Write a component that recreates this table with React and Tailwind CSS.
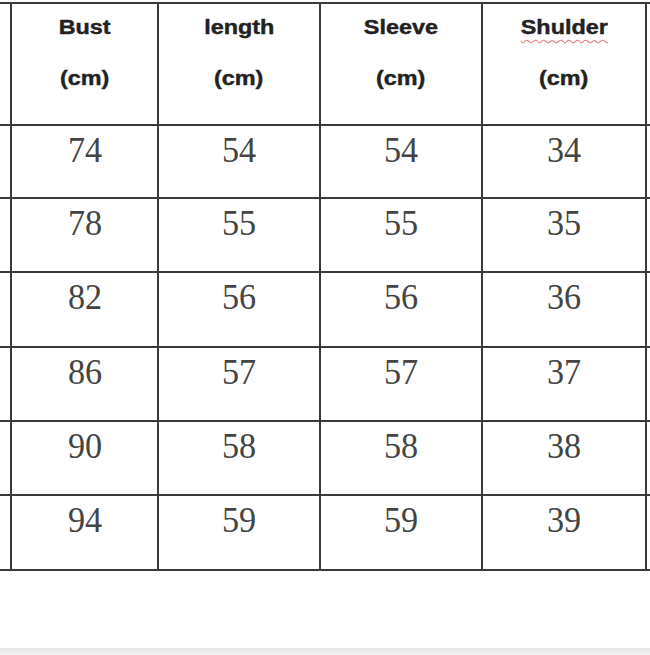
const headers = ["Bust", "length", "Sleeve", "Shulder"];

const rows = [
  { h: "h-[73px]", vals: ["74", "54", "54", "34"] },
  { h: "h-[74px]", vals: ["78", "55", "55", "35"] },
  { h: "h-[75px]", vals: ["82", "56", "56", "36"] },
  { h: "h-[74px]", vals: ["86", "57", "57", "37"] },
  { h: "h-[74px]", vals: ["90", "58", "58", "38"] },
  { h: "h-[75px]", vals: ["94", "59", "59", "39"] },
];

const cell = "border-r-2 border-b-2 border-[#3a3a3a]";

function HeadLabel({ children, wavy }) {
  return (
    <span
      className={
        "inline-block scale-x-[1.2] text-[19.5px] leading-[22px] font-bold text-[#222] [-webkit-text-stroke:0.4px_#222] " +
        (wavy
          ? "underline decoration-wavy decoration-[#e07878] decoration-1 underline-offset-[5px]"
          : "")
      }
    >
      {children}
    </span>
  );
}

export default function App() {
  return (
    <div
      className="w-[650px] h-[655px] bg-white flex flex-col overflow-hidden"
      style={{ fontFamily: '"Liberation Sans", Arial, sans-serif' }}
    >
      <div className="mt-[2px] border-t-2 border-[#3a3a3a] grid grid-cols-[12px_147px_162px_162px_164px_1fr]">
        {/* header row */}
        <div className={cell + " h-[122px]"} />
        {headers.map((h) => (
          <div key={h} className={cell + " h-[122px] flex flex-col items-center pt-[12px] gap-[29px]"}>
            <HeadLabel wavy={h === "Shulder"}>{h}</HeadLabel>
            <HeadLabel>(cm)</HeadLabel>
          </div>
        ))}
        <div className="border-b-2 border-[#3a3a3a] h-[122px]" />

        {/* data rows */}
        {rows.map((r, i) => (
          <div key={i} className="contents">
            <div className={cell + " " + r.h} />
            {r.vals.map((v, j) => (
              <div
                key={j}
                className={cell + " " + r.h + " flex justify-center pt-[6px] text-[36px] leading-[36px] text-[#444]"}
                style={{ fontFamily: '"Liberation Serif", "Times New Roman", serif' }}
              >
                <span className="inline-block scale-x-[0.95]">{v}</span>
              </div>
            ))}
            <div className={"border-b-2 border-[#3a3a3a] " + r.h} />
          </div>
        ))}
      </div>
      <div className="flex-1" />
      <div className="h-[7px] bg-gradient-to-b from-[#e6e6e6] to-[#f2f2f2]" />
    </div>
  );
}
